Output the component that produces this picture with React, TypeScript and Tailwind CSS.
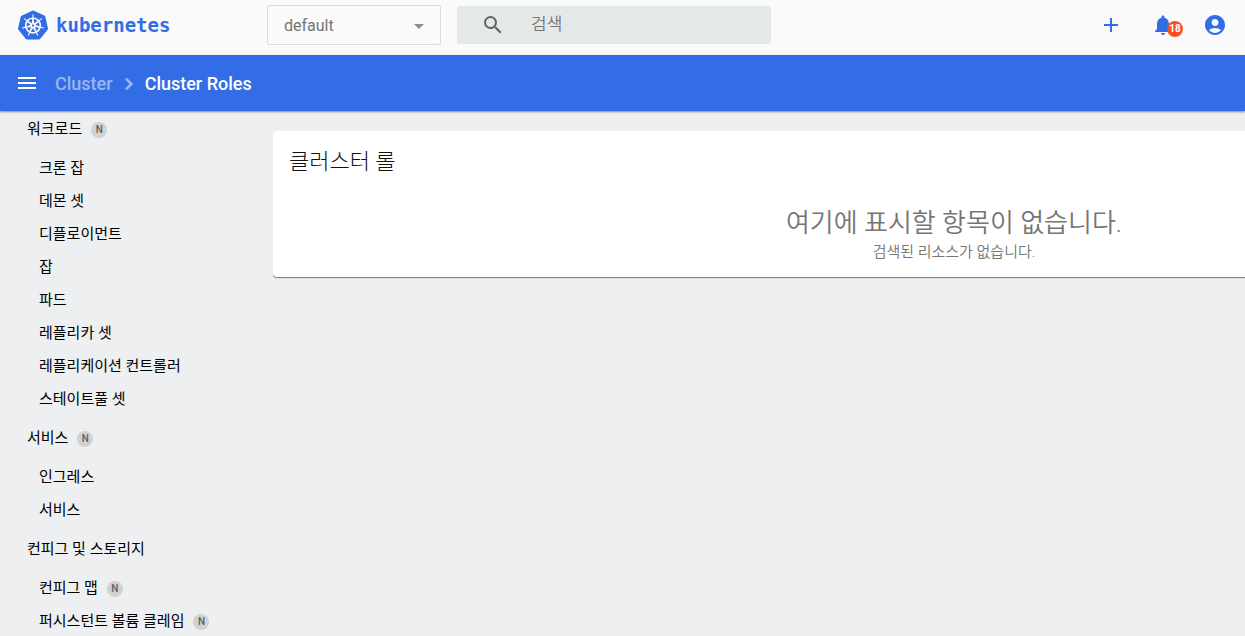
import {
  MdAccountCircle,
  MdAdd,
  MdArrowDropDown,
  MdMenu,
  MdNotifications,
  MdSearch,
} from "react-icons/md";
import { SiKubernetes } from "react-icons/si";

interface NavItem {
  label: string;
  namespaced?: boolean;
}

interface NavGroup extends NavItem {
  items: NavItem[];
}

const NAV_GROUPS: NavGroup[] = [
  {
    label: "워크로드",
    namespaced: true,
    items: [
      { label: "크론 잡" },
      { label: "데몬 셋" },
      { label: "디플로이먼트" },
      { label: "잡" },
      { label: "파드" },
      { label: "레플리카 셋" },
      { label: "레플리케이션 컨트롤러" },
      { label: "스테이트풀 셋" },
    ],
  },
  {
    label: "서비스",
    namespaced: true,
    items: [{ label: "인그레스" }, { label: "서비스" }],
  },
  {
    label: "컨피그 및 스토리지",
    items: [
      { label: "컨피그 맵", namespaced: true },
      { label: "퍼시스턴트 볼륨 클레임", namespaced: true },
    ],
  },
];

function NavLink({ label, namespaced }: NavItem) {
  return (
    <a href="#" className="flex h-[33px] items-center gap-[9px] text-[15px] text-black">
      {label}
      {namespaced && (
        <span className="flex size-4 items-center justify-center rounded-full bg-[#d0d2d3] text-[10px] leading-4 font-medium text-[#5f6061]">
          N
        </span>
      )}
    </a>
  );
}

function Header() {
  return (
    <header className="flex h-[55px] items-center bg-[#fafafa] pr-[10px] pb-[5px] pl-[18px]">
      <a href="#" className="flex w-[249px] items-center gap-2 text-[#326de6]">
        <SiKubernetes className="size-[30px]" />
        <span className="font-['DejaVu_Sans_Mono',monospace] text-[19px] font-bold">kubernetes</span>
      </a>

      <div className="relative w-[174px]">
        <select
          aria-label="Namespace"
          className="h-10 w-full appearance-none rounded-xs border border-[#dcdcdc] bg-[#fafafa] px-4 pt-0.5 text-base text-[#757575]"
        >
          <option>default</option>
        </select>
        <MdArrowDropDown className="pointer-events-none absolute top-[9px] right-[10px] size-6 text-[#8e8e8e]" />
      </div>

      <label className="ml-4 flex h-[38px] w-[314px] items-center gap-[26px] rounded-xs bg-[#e4e8e8] pl-6">
        <MdSearch className="size-6 shrink-0 text-[#616363]" />
        <input
          type="text"
          aria-label="검색"
          placeholder="검색"
          className="min-w-0 flex-1 bg-transparent text-[17px] font-[350] outline-none placeholder:text-[#757777]"
        />
      </label>

      <div className="ml-auto flex gap-3 text-[#326de6]">
        <button aria-label="Create" className="flex size-10 items-center justify-center">
          <MdAdd className="size-6" />
        </button>
        <button aria-label="Notifications" className="relative flex size-10 items-center justify-center">
          <MdNotifications className="size-6" />
          <span className="absolute top-4 right-0 flex size-4 items-center justify-center rounded-full bg-[#fb5026] text-[10px] leading-4 font-bold text-white">
            18
          </span>
        </button>
        <button aria-label="Account" className="flex size-10 items-center justify-center">
          <MdAccountCircle className="size-6" />
        </button>
      </div>
    </header>
  );
}

function ActionBar() {
  return (
    <div className="relative flex h-14 items-center bg-[#326de6] pl-[15px] text-lg font-medium text-white shadow-[0_1px_2px_rgba(0,0,0,0.45)]">
      <button aria-label="Menu" className="mr-4">
        <MdMenu className="size-6" />
      </button>
      <nav className="flex items-center gap-1 pt-0.5">
        <a href="#" className="text-white/50">Cluster</a>
        <svg viewBox="0 0 24 24" className="size-6 fill-none stroke-[#98b6f2]" strokeWidth="2.6">
          <path d="M9 6.6l5.4 5.4L9 17.4" />
        </svg>
        <span>Cluster Roles</span>
      </nav>
    </div>
  );
}

export default function App() {
  return (
    <div className="flex h-screen flex-col overflow-hidden bg-[#edeff0] font-[Roboto,'Noto_Sans_CJK_KR',sans-serif]">
      <Header />
      <ActionBar />
      <div className="flex min-h-0 flex-1">
        <nav className="w-[273px] shrink-0 overflow-hidden pt-0.5 pl-[27px]">
          {NAV_GROUPS.map((group) => (
            <div key={group.label}>
              <NavLink label={group.label} namespaced={group.namespaced} />
              <div className="py-[6px] pl-3">
                {group.items.map((item) => (
                  <NavLink key={item.label} {...item} />
                ))}
              </div>
            </div>
          ))}
        </nav>

        {/* the card keeps its minimum width and runs past the right edge */}
        <main className="min-w-0 flex-1 overflow-hidden pt-5">
          <section className="min-w-[1362px] rounded bg-white px-4 pt-4 pb-[14px] shadow-[0_1px_1px_rgba(0,0,0,0.5)]">
            <h1 className="text-[22px] leading-[30px] font-light text-[#111]">클러스터 롤</h1>
            <div className="pt-7 text-center font-[350] text-[#757575]">
              <p className="text-[26px] leading-9">여기에 표시할 항목이 없습니다.</p>
              <p className="text-[15px] leading-[22px]">검색된 리소스가 없습니다.</p>
            </div>
          </section>
        </main>
      </div>
    </div>
  );
}
